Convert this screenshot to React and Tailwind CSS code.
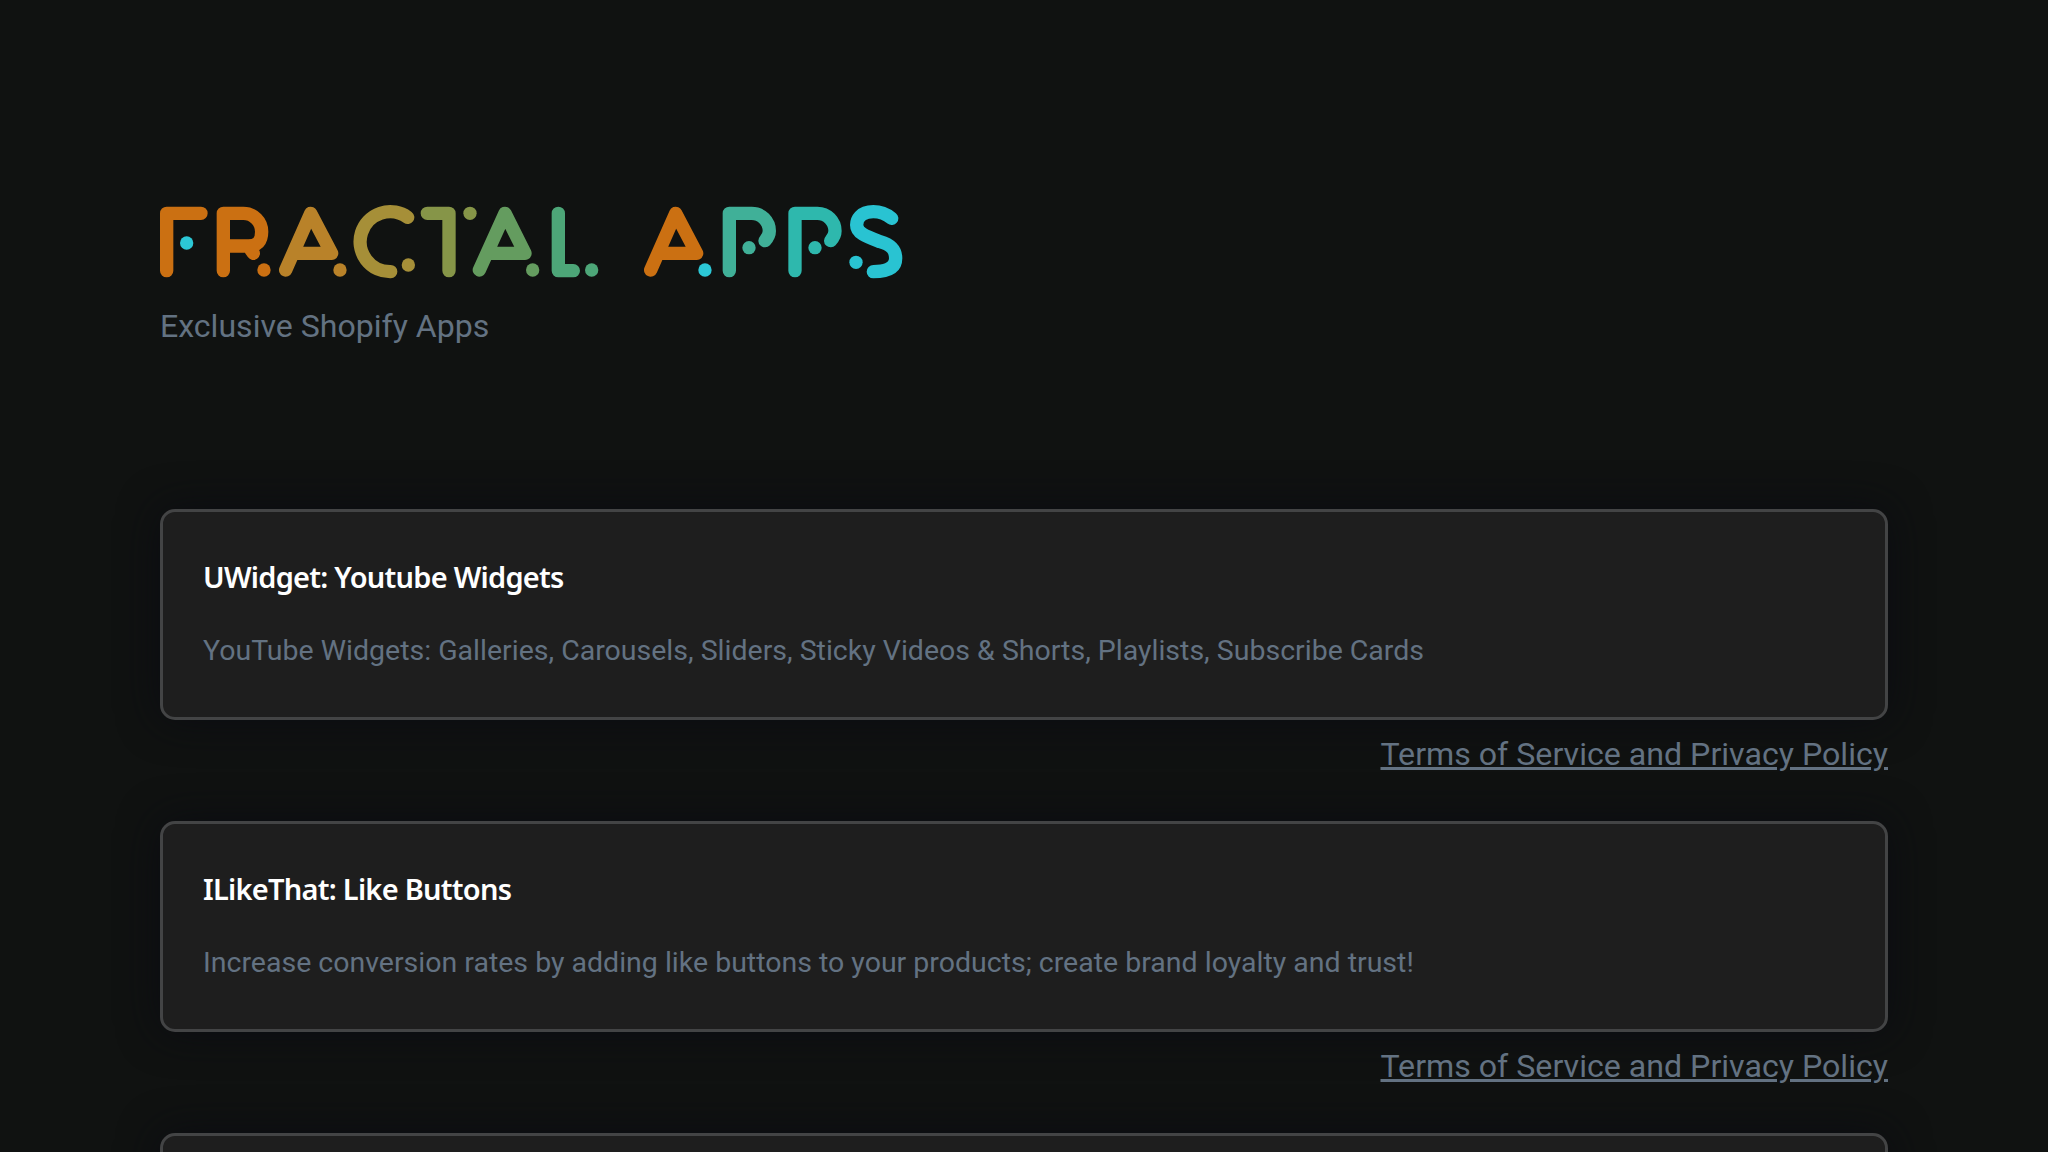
const Dot = ({ x, y, c, r = 20 }) => <circle cx={x} cy={y} r={r} fill={c} stroke="none" />;

function Logo() {
  return (
    <svg width="760" height="85" viewBox="0 0 760 85" className="block" fill="none" strokeLinecap="round" strokeLinejoin="round">
      <g transform="translate(-160 -200)">
        <g transform="translate(155 200) scale(0.33333)" strokeWidth="40">
          <path d="M35 212V40H138" stroke="#cb7012" />
          <Dot x={95} y={129} c="#2cc8d6" />
          <path d="M205 212V40H265A55 55 0 0 1 320 95Q320 138 280 138H205M280 138L295 160" stroke="#cb7012" />
          <Dot x={327} y={210} c="#cb7012" />
          <path d="M392 210L467 40L530 160H425" stroke="#b98229" />
          <Dot x={555} y={210} c="#b98229" />
        </g>
        <g transform="translate(340 200) scale(0.33333)" strokeWidth="40">
          <path d="M203 52A90 90 0 1 0 152 215" stroke="#a68f38" />
          <Dot x={205} y={195} c="#a68f38" />
          <path d="M262 40H327V212" stroke="#869548" />
          <Dot x={390} y={40} c="#869548" />
          <path d="M418 210L495 40L555 160H450" stroke="#649c5f" />
          <Dot x={578} y={210} c="#649c5f" />
        </g>
        <g transform="translate(530 200) scale(0.33333)" strokeWidth="40">
          <path d="M85 40V212H130" stroke="#4da678" />
          <Dot x={185} y={210} c="#4da678" />
          <path d="M362 210L437 40L500 160H395" stroke="#cb7012" />
          <Dot x={525} y={210} c="#2cc8d6" />
        </g>
        <g transform="translate(710 200) scale(0.33333)" strokeWidth="40">
          <path d="M58 212V40H125A53 53 0 0 1 178 93Q178 108 165 122" stroke="#40b098" />
          <Dot x={117} y={143} c="#40b098" />
          <path d="M255 212V40H322A53 53 0 0 1 375 93Q375 108 362 122" stroke="#2eb8ad" />
          <Dot x={315} y={143} c="#2eb8ad" />
          <path d="M545 55Q520 35 490 35C450 35 440 60 440 75C440 100 470 110 510 125C545 135 557 150 557 175C557 205 530 215 490 215" stroke="#29c3d2" />
          <Dot x={438} y={187} c="#29c3d2" />
        </g>
      </g>
    </svg>
  );
}

const roboto = "font-['Roboto',sans-serif]";

function AppCard({ title, desc }) {
  return (
    <div className="h-[211px] box-border rounded-[15px] border-[3px] border-[#434445] bg-[#1e1e1e] px-10 pt-[40px] shadow-[0_0_40px_rgba(11,12,18,0.95)]">
      {title && <h2 className="text-[29px] tracking-[-0.75px] leading-[50px] font-semibold text-white font-['Noto_Sans',sans-serif]">{title}</h2>}
      {desc && <p className={`mt-[28px] text-[28.5px] leading-[42px] text-[#637282] ${roboto}`}>{desc}</p>}
    </div>
  );
}

function Terms() {
  return (
    <div className="mt-[10px] mb-[43px] flex justify-end">
      <a href="#" className={`text-[32.15px] leading-[48px] text-[#637282] underline decoration-[3px] ${roboto}`}>Terms of Service and Privacy Policy</a>
    </div>
  );
}

export default function App() {
  return (
    <div className="h-[1152px] overflow-hidden bg-[#101211] px-40 pt-[200px]">
      <Logo />
      <p className={`mt-[17px] text-[32.1px] leading-[48px] text-[#637282] ${roboto}`}>Exclusive Shopify Apps</p>
      <div className="mt-[159px]">
        <AppCard title="UWidget: Youtube Widgets" desc="YouTube Widgets: Galleries, Carousels, Sliders, Sticky Videos & Shorts, Playlists, Subscribe Cards" />
        <Terms />
        <AppCard title="ILikeThat: Like Buttons" desc="Increase conversion rates by adding like buttons to your products; create brand loyalty and trust!" />
        <Terms />
        <AppCard />
      </div>
    </div>
  );
}
